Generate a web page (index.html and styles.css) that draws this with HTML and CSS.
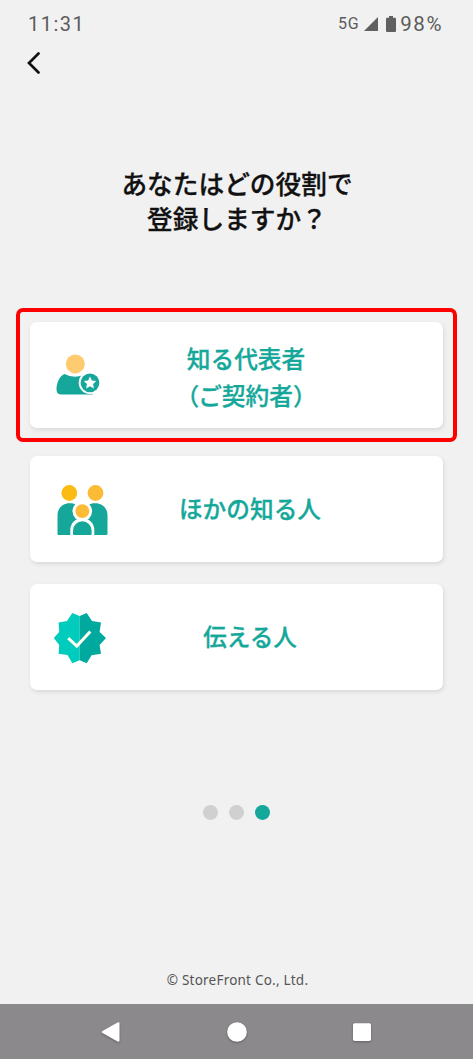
FILE: index.html
```html
<!DOCTYPE html>
<html lang="ja">
<head>
<meta charset="utf-8">
<title>役割の登録</title>
<link rel="stylesheet" href="styles.css">
</head>
<body>
<div class="screen">
  <header class="status">
    <span class="time">11:31</span>
    <div class="indicators">
      <span class="network">5G</span>
      <svg class="signal" width="14" height="14" viewBox="0 0 14 14"><path d="M14 0V14H0Z" fill="#606060"/></svg>
      <svg class="battery" width="10" height="16" viewBox="0 0 10 16"><path d="M3 0h4v1.700h2q1 0 1 1V15q0 1-1 1H1q-1 0-1-1V2.700q0-1 1-1h2z" fill="#606060"/></svg>
      <span class="percent">98%</span>
    </div>
  </header>
  <nav class="back">
    <svg width="14" height="22" viewBox="0 0 14 22"><path d="M11.500 1.500 2 11l9.500 9.500" fill="none" stroke="#111" stroke-width="2.700" stroke-linecap="round"/></svg>
  </nav>
  <h1 class="title">あなたはどの役割で<br>登録しますか？</h1>
  <main class="roles">
    <div class="highlight">
      <button class="card">
        <svg class="icon" width="56" height="56" viewBox="0 0 56 56">
          <circle cx="23.300" cy="16.900" r="9.500" fill="#ffcb70"/>
          <path d="M12.500 27.100q10.500 5.500 21 0l7 6v14.300H9.500q-5 0-5-5c0-6 3-13.400 8-15.300Z" fill="#15a89a"/>
          <circle cx="38" cy="35.800" r="11.300" fill="#fff"/>
          <circle cx="38" cy="35.800" r="9.400" fill="#15a89a"/>
          <path d="m38 29.400 1.900 4 4.300.6-3.100 3 .8 4.400-3.900-2.100-3.900 2.100.8-4.400-3.100-3 4.300-.6Z" fill="#fff"/>
        </svg>
        <span class="label first">知る代表者<br><span class="open">（</span>ご契約者）</span>
      </button>
    </div>
    <button class="card">
      <svg class="icon" width="56" height="56" viewBox="0 0 56 56">
        <circle cx="17.300" cy="12" r="7.900" fill="#fbbb12"/>
        <circle cx="43.500" cy="12" r="7.900" fill="#fbbb35"/>
        <path d="M5.500 53V34.500C5.500 27 11 22.300 17.500 22.300c10 0 13 6 13 14V54h-24q-1 0-1-1ZM55.500 53V34.500C55.500 27 50 22.300 43.500 22.300c-10 0-13 6-13 14V54h24q1 0 1-1Z" fill="#15a89a"/>
        <circle cx="30.300" cy="30.200" r="9.800" fill="#fff"/>
        <path d="M18.300 55V49a12 12 0 0 1 24 0v6Z" fill="#fff"/>
        <circle cx="30.300" cy="30.200" r="6.900" fill="#fbbb35"/>
        <path d="M21 53v-3.500a9.300 9.300 0 0 1 18.600 0V53q0 1-1 1H22q-1 0-1-1Z" fill="#15a89a"/>
      </svg>
      <span class="label">ほかの知る人</span>
    </button>
    <button class="card">
      <svg class="icon" width="56" height="56" viewBox="0 0 56 56">
        <g transform="translate(-1.700 1.600)">
          <path d="M29.400 5.300 22 2.500 16.700 10.300 8.300 12l.6 9.300L3.500 27.500l5.400 7-.6 8.700 8.900 1.300L22 52.700l7.400-3Z" fill="#00ccbd"/>
          <path d="m29.400 5.300 7-2.800 5.300 8 9 1.500-1.400 9.300 6.400 6.200-6.400 7 1.400 8.700-9.400 1.500-4.900 8-7-3Z" fill="#00a99d"/>
          <path d="m17.900 27.500 8.600 8 13.500-14.700" fill="none" stroke="#fffef2" stroke-width="3"/>
        </g>
      </svg>
      <span class="label">伝える人</span>
    </button>
  </main>
  <div class="dots"><i class="dot"></i><i class="dot"></i><i class="dot active"></i></div>
  <footer class="copyright">© StoreFront Co., Ltd.</footer>
  <nav class="navbar">
    <svg width="20" height="22" viewBox="0 0 20 22"><path d="M1.500 10 16.500 1.500q2-.6 2 1v17q0 1.600-2 1L1.500 12q-1.600-1 0-2Z" fill="#fff"/></svg>
    <svg width="22" height="22" viewBox="0 0 22 22"><circle cx="11" cy="11" r="9.800" fill="#fff"/></svg>
    <svg width="20" height="22" viewBox="0 0 20 22"><rect x="1" y="2.300" width="18" height="17.700" rx="1.800" fill="#fff"/></svg>
  </nav>
</div>
</body>
</html>
```
FILE: styles.css
```css
* { box-sizing: border-box; }
body {
  margin: 0;
  background: #f1f1f1;
  font-family: "Noto Sans", "Noto Sans CJK JP", sans-serif;
}
svg { display: block; flex: none; }
.screen {
  display: flex;
  flex-direction: column;
  width: 473px;
  height: 1059px;
  overflow: hidden;
}
.status {
  display: flex;
  justify-content: space-between;
  align-items: center;
  height: 47px;
  padding: 0 31px 0 28px;
  color: #5c5c5c;
  font-family: Roboto, sans-serif;
  font-size: 20px;
}
.time { letter-spacing: 1.5px; }
.indicators { display: flex; align-items: center; }
.network { font-size: 16px; letter-spacing: 0.6px; }
.signal { margin-left: 4px; }
.battery { margin-left: 8px; }
.percent { margin-left: 4px; font-size: 20.500px; letter-spacing: 1.6px; margin-right: -1px; }
.network { margin-right: 1px; }
.back { height: 26px; padding: 5px 0 0 27px; }
.title {
  margin: 92px 0 0;
  padding-left: 1px;
  text-align: center;
  font-family: "Noto Sans CJK JP", sans-serif;
  font-size: 25.7px;
  font-weight: 500;
  line-height: 35px;
  color: #111;
  -webkit-text-stroke: 0.3px #111;
}
.roles {
  display: flex;
  flex-direction: column;
  align-items: center;
  gap: 22px;
  margin-top: 73px;
}
.highlight {
  width: 441px;
  height: 134px;
  margin-bottom: -8px;
  padding: 10px;
  border: 4px solid #f00;
  border-radius: 7px;
}
.card {
  display: flex;
  align-items: center;
  width: 413px;
  height: 106px;
  margin: 0;
  padding: 0 0 0 22px;
  border: 0;
  border-radius: 7px;
  background: #fff;
  box-shadow: 1px 2px 4px rgba(0, 0, 0, 0.1);
}
.label {
  width: 284px;
  padding-bottom: 2px;
  text-align: center;
  font-family: "Noto Sans CJK JP", sans-serif;
  font-size: 23.7px;
  font-weight: 500;
  line-height: 37px;
  color: #15a89a;
  -webkit-text-stroke: 0.3px #15a89a;
}
.first { margin-left: -4px; padding: 3px 0 0; }
.open { letter-spacing: -1px; }
.dots {
  display: flex;
  justify-content: center;
  gap: 11.500px;
  margin-top: 115px;
}
.dot { width: 14.800px; height: 14.800px; border-radius: 50%; background: #d0d0d0; }
.dot.active { background: #15a89a; }
.copyright {
  margin-top: auto;
  padding: 0 0 14px 2px;
  text-align: center;
  font-size: 13.500px;
  letter-spacing: 0.22px;
  line-height: 20px;
  color: #555;
}
.navbar {
  display: flex;
  align-items: center;
  justify-content: space-between;
  height: 55px;
  padding: 0 101px;
  background: #8c898c;
}
.navbar svg { filter: drop-shadow(0 1px 1px rgba(0, 0, 0, 0.3)); }
```
